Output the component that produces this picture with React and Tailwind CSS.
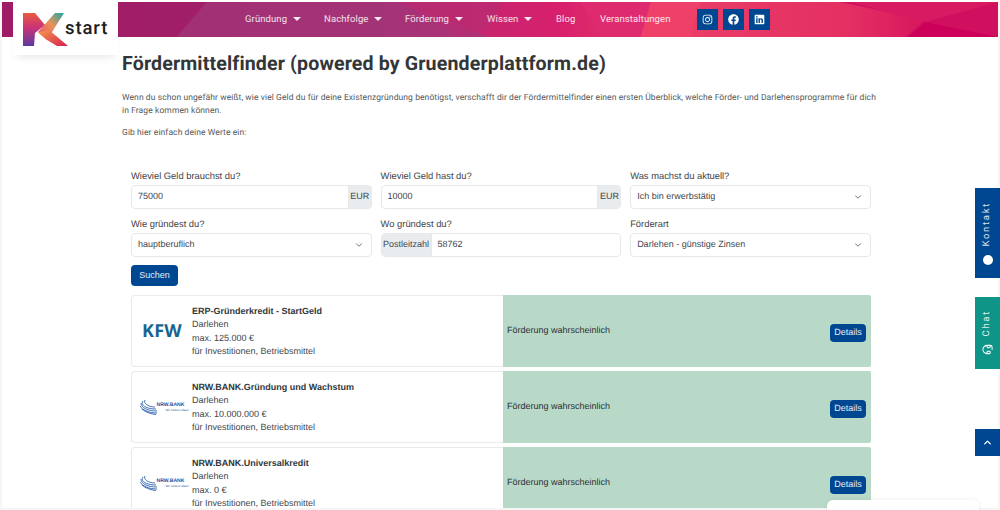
import React from "react";
import { FaInstagram, FaFacebook, FaLinkedin } from "react-icons/fa";
import { ChevronDown, ChevronUp, Headset } from "lucide-react";

function Caret() {
  return <span className="ml-[6px] -mt-[2px] inline-block w-0 h-0 border-x-[4px] border-x-transparent border-t-[4px] border-t-white/90" />;
}

function NavItem({ label, caret, className }) {
  return (
    <span className={`flex items-center whitespace-nowrap pt-[1.5px] ${className}`}>
      {label}
      {caret && <Caret />}
    </span>
  );
}

function HeaderArt() {
  return (
    <svg className="absolute inset-0 w-full h-full" viewBox="0 0 998 35" preserveAspectRatio="none">
      <defs>
        <linearGradient id="hg" x1="0" x2="1" y1="0" y2="0">
          <stop offset="0" stopColor="#a01b66" />
          <stop offset="0.2" stopColor="#a11f68" />
          <stop offset="0.38" stopColor="#a62a6e" />
          <stop offset="0.46" stopColor="#c22770" />
          <stop offset="0.56" stopColor="#d8206c" />
          <stop offset="0.68" stopColor="#e93d68" />
          <stop offset="0.85" stopColor="#e42f63" />
          <stop offset="1" stopColor="#cb0059" />
        </linearGradient>
      </defs>
      <rect width="998" height="35" fill="url(#hg)" />
      <polygon points="175,35 205,0 398,0 488,35" fill="#a3377a" opacity="0.7" />
      <polygon points="398,0 500,0 488,26 460,35" fill="#b82c72" opacity="0.7" />
      <polygon points="580,0 655,0 640,35 600,35" fill="#de2a6f" />
      <polygon points="650,0 700,0 690,35 640,35" fill="#ee4069" />
      <polygon points="840,0 925,18 905,35 998,35 998,0" fill="#d0105f" />
      <polygon points="908,35 925,20 998,35" fill="#cc005a" />
      <polygon points="850,0 998,0 925,20" fill="#d81a63" />
    </svg>
  );
}

function Logo() {
  return (
    <svg width="46" height="34" viewBox="0 0 46 34" className="block">
      <defs>
        <linearGradient id="l1" x1="0" y1="0" x2="0" y2="1">
          <stop offset="0" stopColor="#ea5a3c" />
          <stop offset="0.45" stopColor="#c9327a" />
          <stop offset="1" stopColor="#5b3aa0" />
        </linearGradient>
        <linearGradient id="l2" x1="0" y1="1" x2="1" y2="0">
          <stop offset="0" stopColor="#e8466a" />
          <stop offset="0.55" stopColor="#e9925a" />
          <stop offset="1" stopColor="#16a9a8" />
        </linearGradient>
        <linearGradient id="l3" x1="0" y1="0" x2="1" y2="1">
          <stop offset="0" stopColor="#f49a4a" />
          <stop offset="1" stopColor="#d81f50" />
        </linearGradient>
      </defs>
      <polygon points="0,0 12,0 22,12 12,20 11,33 0,33" fill="url(#l1)" />
      <polygon points="15,19 32,0 41,0 24,27" fill="url(#l2)" />
      <polygon points="24,27 15,19.5 26,17 45,33 34,33" fill="url(#l3)" />
    </svg>
  );
}

function NrwLogo() {
  return (
    <div className="relative w-[45px] h-[16px]">
      <svg width="45" height="16" viewBox="0 0 45 16" className="absolute inset-0">
        <g fill="none" stroke="#2d5fb0" strokeWidth="0.9">
          <path d="M3 2 C0 6 6 10 16 10" />
          <path d="M1 4 C1 9 8 12 17 12" />
          <path d="M0 7 C2 11 9 14 17 14" />
          <path d="M2 10 C5 13 11 15 16 15.5" />
          <path d="M5 1 C3 4 8 8 15 8" />
        </g>
      </svg>
      <span className="absolute left-[17px] top-[3px] text-[5.1px] leading-[7px] font-bold text-[#1f4f9e] whitespace-nowrap">NRW.BANK</span>
      <span className="absolute left-[26px] top-[9px] text-[3px] leading-[4px] text-[#1f4f9e] whitespace-nowrap">Wir fördern Ideen</span>
    </div>
  );
}

function Field({ label, children }) {
  return (
    <div className="flex flex-col">
      <label className="text-[9.4px] leading-[12px] text-[#3f4347] mb-[2.5px] h-[12px]">{label}</label>
      {children}
    </div>
  );
}

function TextInput({ value, suffix, prefix }) {
  return (
    <div className="flex h-[24px] rounded-[4px] border border-[#e6e8ea] text-[9px] text-[#43474b] overflow-hidden bg-white">
      {prefix && <span className="flex items-center pt-[1px] w-[50px] justify-center bg-[#e9ecef] border-r border-[#e6e8ea]">{prefix}</span>}
      <span className="flex-1 flex items-center pt-[1px] px-[6px]">{value}</span>
      {suffix && <span className="flex items-center pt-[1px] justify-center w-[23px] bg-[#e9ecef] border-l border-[#e6e8ea]">{suffix}</span>}
    </div>
  );
}

function SelectBox({ value }) {
  return (
    <div className="flex h-[24px] items-center justify-between rounded-[4px] border border-[#e6e8ea] text-[9px] text-[#43474b] bg-white pl-[6px] pr-[7px]">
      <span className="pt-[1px]">{value}</span>
      <ChevronDown size={10} strokeWidth={1.8} className="text-[#43474b]" />
    </div>
  );
}

function ResultCard({ logo, title, amount }) {
  return (
    <div className="flex h-[72px] shrink-0">
      <div className="w-[372px] flex items-center border border-[#e8eaec] border-r-0 rounded-l-[4px] bg-white">
        <div className="w-[60px] flex justify-center items-center shrink-0">{logo}</div>
        <div className="text-[9px] leading-[13.4px] text-[#43474b] pt-[2px]">
          <div className="font-bold text-[#33373a]">{title}</div>
          <div>Darlehen</div>
          <div>max. {amount} €</div>
          <div>für Investitionen, Betriebsmittel</div>
        </div>
      </div>
      <div className="flex-1 bg-[#b9d9c8] rounded-r-[2px] flex items-center justify-between pl-[4px] pr-[5px] text-[9px] text-[#2c3034]">
        <span className="pt-[1px]">Förderung wahrscheinlich</span>
        <span className="mt-[4px] pt-[1px] h-[18px] w-[36px] flex items-center justify-center rounded-[4px] bg-[#004791] text-white/90">Details</span>
      </div>
    </div>
  );
}

export default function App() {
  return (
    <div className="relative w-[1000px] h-[510px] overflow-hidden bg-[#f6f6f6] [text-rendering:geometricPrecision] [font-family:'Liberation_Sans',Arial,sans-serif]">
      <div className="relative mx-[2px] h-[508px] bg-white overflow-hidden">
        <header className="relative mt-[2px] h-[35px]">
          <HeaderArt />
          <nav className="relative h-full flex items-center pl-[243px] text-[9.5px] text-white/85 tracking-[0.1px] [font-family:Roboto,sans-serif]">
            <NavItem label="Gründung" caret className="w-[79px]" />
            <NavItem label="Nachfolge" caret className="w-[81px]" />
            <NavItem label="Förderung" caret className="w-[82px]" />
            <NavItem label="Wissen" caret className="w-[69px]" />
            <NavItem label="Blog" className="w-[44px]" />
            <NavItem label="Veranstaltungen" className="w-[97px]" />
            <div className="flex gap-[5px]">
              <span className="w-[21px] h-[21px] flex items-center justify-center bg-[#004791] text-white"><FaInstagram size={11} /></span>
              <span className="w-[21px] h-[21px] flex items-center justify-center bg-[#004791] text-white"><FaFacebook size={11} /></span>
              <span className="w-[21px] h-[21px] flex items-center justify-center bg-[#004791] text-white"><FaLinkedin size={11} /></span>
            </div>
          </nav>
        </header>

        <div className="absolute left-[11px] top-0 w-[105px] h-[55px] bg-white shadow-[0_6px_8px_-4px_rgba(0,0,0,0.1)] flex items-start pl-[10px] pt-[13px]">
          <Logo />
          <span className="absolute left-[52px] top-[18px] text-[18.5px] leading-[20px] font-medium text-[#1d1d1f] [font-family:Roboto,sans-serif] tracking-[0.9px]">start</span>
        </div>

        <main className="ml-[120px] w-[752px] pt-[2px]">
          <h1 className="mt-[12px] text-[19.6px] leading-[26px] font-bold text-[#333638] tracking-[0.14px] [font-family:Roboto,sans-serif] whitespace-nowrap">Fördermittelfinder (powered by Gruenderplattform.de)</h1>
          <p className="mt-[15px] w-[755px] text-[8.5px] leading-[13.4px] text-[#55595c] tracking-[0.09px] [font-family:Roboto,sans-serif]">
            Wenn du schon ungefähr weißt, wie viel Geld du für deine Existenzgründung benötigst, verschafft dir der Fördermittelfinder einen ersten Überblick, welche Förder- und Darlehensprogramme für dich in Frage kommen können.
          </p>
          <p className="mt-[8px] text-[8.5px] leading-[13.4px] text-[#55595c] tracking-[0.09px] [font-family:Roboto,sans-serif]">Gib hier einfach deine Werte ein:</p>

          <div className="ml-[9px] w-[740px] mt-[30px]">
            <div className="grid grid-cols-3 gap-x-[8.7px] gap-y-[9.5px]">
              <Field label="Wieviel Geld brauchst du?"><TextInput value="75000" suffix="EUR" /></Field>
              <Field label="Wieviel Geld hast du?"><TextInput value="10000" suffix="EUR" /></Field>
              <Field label="Was machst du aktuell?"><SelectBox value="Ich bin erwerbstätig" /></Field>
              <Field label="Wie gründest du?"><SelectBox value="hauptberuflich" /></Field>
              <Field label="Wo gründest du?"><TextInput value="58762" prefix="Postleitzahl" /></Field>
              <Field label="Förderart"><SelectBox value="Darlehen - günstige Zinsen" /></Field>
            </div>
            <button className="mt-[8px] block w-[47px] h-[21px] pt-[1px] rounded-[4px] bg-[#004791] text-white/90 text-[9px]">Suchen</button>
            <div className="mt-[9px] flex flex-col gap-[4px]">
              <ResultCard
                title="ERP-Gründerkredit - StartGeld"
                amount="125.000"
                logo={<span className="text-[#17658f] text-[18px] font-bold leading-none tracking-[0.3px] [font-family:'Open_Sans',sans-serif]">KFW</span>}
              />
              <ResultCard title="NRW.BANK.Gründung und Wachstum" amount="10.000.000" logo={<NrwLogo />} />
              <ResultCard title="NRW.BANK.Universalkredit" amount="0" logo={<NrwLogo />} />
            </div>
          </div>
        </main>
      </div>

      <div className="absolute left-[975px] top-[188px] w-[25px] h-[90px] bg-[#004791] text-white/85 flex flex-col items-center justify-end pb-[13px]">
        <span className="[writing-mode:vertical-rl] rotate-180 text-[9.5px] tracking-[1.7px] mb-[8px] [font-family:Roboto,sans-serif]">Kontakt</span>
        <span className="w-[10px] h-[10px] rounded-full bg-white" />
      </div>
      <div className="absolute left-[975px] top-[297px] w-[25px] h-[72px] bg-[#0f9488] text-white/85 flex flex-col items-center justify-end pb-[14px]">
        <span className="[writing-mode:vertical-rl] rotate-180 text-[9.5px] tracking-[1.7px] mb-[8px] [font-family:Roboto,sans-serif]">Chat</span>
        <Headset size={11} strokeWidth={2.2} className="text-white -rotate-90" />
      </div>
      <div className="absolute left-[975px] top-[429px] w-[25px] h-[27px] bg-[#004791] flex items-center justify-center">
        <ChevronUp size={11} strokeWidth={3} className="text-white" />
      </div>
      <div className="absolute left-[827px] top-[500px] w-[152px] h-[20px] bg-white rounded-t-[6px] shadow-[0_0_4px_rgba(0,0,0,0.08)]" />
    </div>
  );
}
